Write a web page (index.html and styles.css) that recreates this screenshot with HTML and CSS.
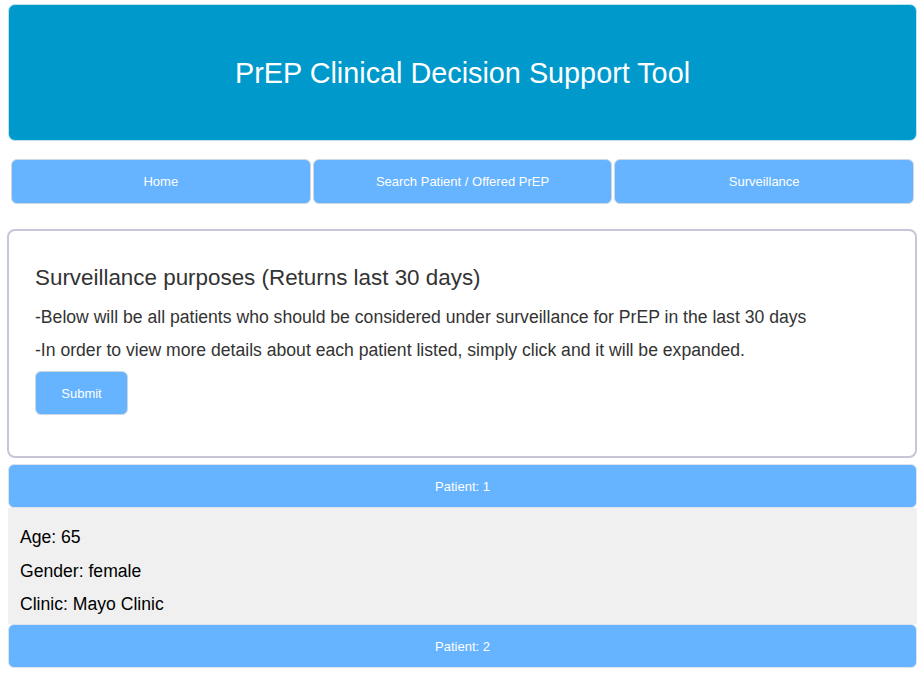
FILE: index.html
```html
<!DOCTYPE html>
<html>
<head>
<meta charset="utf-8">
<link rel="stylesheet" href="styles.css">
</head>
<body>
<div class="page">
  <header class="banner"><h1>PrEP Clinical Decision Support Tool</h1></header>
  <nav class="nav">
    <a class="nav-btn">Home</a>
    <a class="nav-btn">Search Patient / Offered PrEP</a>
    <a class="nav-btn">Surveillance</a>
  </nav>
  <section class="card">
    <h2>Surveillance purposes (Returns last 30 days)</h2>
    <p>-Below will be all patients who should be considered under surveillance for PrEP in the last 30 days</p>
    <p>-In order to view more details about each patient listed, simply click and it will be expanded.</p>
    <button class="submit">Submit</button>
  </section>
  <div class="patient-bar">Patient: 1</div>
  <div class="patient-panel">
    <p>Age: 65</p>
    <p>Gender: female</p>
    <p>Clinic: Mayo Clinic</p>
  </div>
  <div class="patient-bar">Patient: 2</div>
</div>
</body>
</html>
```

FILE: styles.css
```css
html, body {
  margin: 0;
  padding: 0;
  background: #ffffff;
  font-family: "Liberation Sans", Arial, sans-serif;
}
.page {
  margin: 0 7px 0 8px;
  padding-top: 4px;
}
.banner {
  height: 135px;
  background: #0099cc;
  border: 1px solid #bfe3f0;
  border-radius: 7px;
  display: flex;
  align-items: center;
  justify-content: center;
}
.banner h1 {
  margin: 0;
  padding-top: 2px;
  font-weight: normal;
  font-size: 28.8px;
  color: #ffffff;
}
.nav {
  display: flex;
  gap: 2px;
  margin-top: 18px;
  padding: 0 3px;
}
.nav-btn {
  flex: 1;
  height: 43px;
  background: #66b3ff;
  border: 1px solid #cfd8e0;
  border-radius: 6px;
  color: #ffffff;
  font-size: 13px;
  display: flex;
  align-items: center;
  justify-content: center;
}
.card {
  margin: 25px 0 0 -1px;
  border: 2px solid #c6c6d8;
  border-radius: 8px;
  height: 225px;
  padding: 0 26px;
  color: #333333;
}
.card h2 {
  margin: 0;
  padding-top: 34px;
  font-weight: normal;
  font-size: 22.4px;
  line-height: 25px;
}
.card p {
  margin: 0;
  font-size: 17.6px;
  line-height: 20px;
}
.card h2 + p {
  margin-top: 17px;
}
.card p + p {
  margin-top: 13px;
}
.submit {
  margin-top: 11px;
  width: 93px;
  height: 44px;
  background: #66b3ff;
  border: 1px solid #cfd8e0;
  border-radius: 6px;
  color: #ffffff;
  font-family: "Liberation Sans", Arial, sans-serif;
  font-size: 13px;
  padding: 0;
}
.patient-bar {
  height: 42px;
  background: #66b3ff;
  border: 1px solid #dde3ea;
  border-radius: 6px;
  color: #ffffff;
  font-size: 13px;
  display: flex;
  align-items: center;
  justify-content: center;
}
.card + .patient-bar {
  margin-top: 6px;
}
.patient-panel {
  background: #f0f0f0;
  height: 116px;
  padding: 0 12px;
  box-sizing: border-box;
  padding-top: 19px;
  color: #000000;
}
.patient-panel p {
  margin: 0 0 13.5px 0;
  font-size: 17.6px;
  line-height: 20px;
}
```
